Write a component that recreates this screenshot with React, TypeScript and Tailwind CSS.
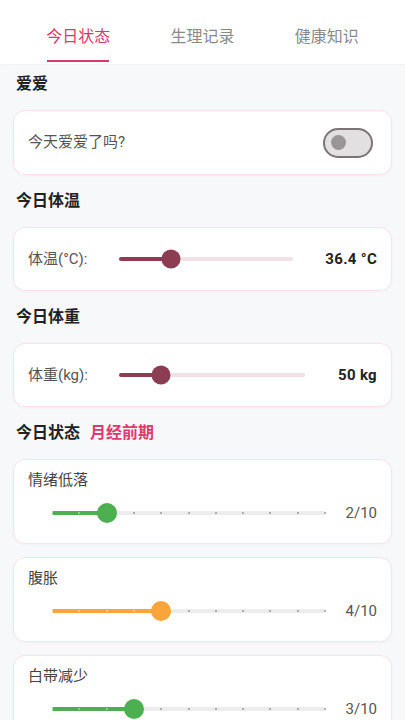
import { useState } from 'react';

const FONT = { fontFamily: 'Roboto, "Noto Sans CJK SC", "Noto Sans", sans-serif' };

const TABS = ['今日状态', '生理记录', '健康知识'];

const SYMPTOMS = [
  { name: '情绪低落', value: 2, color: '#4caf50' },
  { name: '腹胀', value: 4, color: '#f9a53c' },
  { name: '白带减少', value: 3, color: '#4caf50' },
];

function SectionTitle({ children }: { children: React.ReactNode }) {
  return (
    <div className="mt-4 flex h-5 items-center gap-[10px] px-4 text-[16px] font-bold leading-5 text-[#222]">
      {children}
    </div>
  );
}

function Card({ children, className = '' }: { children: React.ReactNode; className?: string }) {
  return (
    <div
      className={`mx-[13px] rounded-[12px] border border-[#f8e3ea] bg-white shadow-[0_1px_3px_rgba(0,0,0,0.03)] ${className}`}
    >
      {children}
    </div>
  );
}

function MeasureSlider({ pct }: { pct: number }) {
  return (
    <div className="relative h-5 flex-1">
      <div className="absolute left-0 right-0 top-1/2 h-1 -translate-y-1/2 rounded-full bg-[#f1e0e5]" />
      <div
        className="absolute left-0 top-1/2 h-1 -translate-y-1/2 rounded-full bg-[#8c3d54]"
        style={{ width: `${pct}%` }}
      />
      <div
        className="absolute top-1/2 h-[19px] w-[19px] -translate-x-1/2 -translate-y-1/2 rounded-full bg-[#8c3d54]"
        style={{ left: `${pct}%` }}
      />
    </div>
  );
}

function LevelSlider({ value, color }: { value: number; color: string }) {
  const pct = value * 10;
  return (
    <div className="relative h-5 w-[273px]">
      <div className="absolute left-0 right-0 top-1/2 h-1 -translate-y-1/2 rounded-full bg-[#ececec]" />
      <div
        className="absolute left-0 top-1/2 h-1 -translate-y-1/2 rounded-full"
        style={{ width: `${pct}%`, backgroundColor: color }}
      />
      {Array.from({ length: 11 }).map((_, i) => (
        <div
          key={i}
          className={`absolute top-1/2 h-[2px] w-[2px] -translate-x-1/2 -translate-y-1/2 rounded-full ${
            i < value ? 'bg-white/50' : 'bg-[#999]'
          }`}
          style={{ left: `${i * 10}%` }}
        />
      ))}
      <div
        className="absolute top-1/2 h-5 w-5 -translate-x-1/2 -translate-y-1/2 rounded-full"
        style={{ left: `${pct}%`, backgroundColor: color }}
      />
    </div>
  );
}

export default function App() {
  const [tab, setTab] = useState(0);
  const [love, setLove] = useState(false);

  return (
    <div className="min-h-screen bg-[#f7f8fa] pb-6" style={FONT}>
      <header className="flex h-16 bg-white px-4 shadow-[0_1px_2px_rgba(0,0,0,0.03)]">
        {TABS.map((t, i) => (
          <button
            key={t}
            onClick={() => setTab(i)}
            className="flex flex-1 flex-col items-center"
          >
            <span
              className={`mt-[26px] text-[16px] leading-[22px] ${
                tab === i ? 'text-[#d93a6c]' : 'text-[#8a8a8a]'
              }`}
            >
              {t}
            </span>
            {tab === i && <span className="mt-[12px] h-[2px] w-[62px] bg-[#d93a6c]" />}
          </button>
        ))}
      </header>

      <div className="mt-[10px] flex h-5 items-center px-4 text-[16px] font-bold leading-5 text-[#222]">爱爱</div>
      <Card className="mt-4 flex h-[65px] items-center justify-between pl-[14px] pr-[18px]">
        <span className="text-[15px] text-[#555]">今天爱爱了吗?</span>
        <button
          onClick={() => setLove(!love)}
          className="flex h-[30px] w-[50px] items-center rounded-full border-2 border-[#7a7474] bg-[#e2e0e0] px-[6px]"
        >
          <span className="h-[15px] w-[15px] rounded-full bg-[#9a9696]" />
        </button>
      </Card>

      <SectionTitle>今日体温</SectionTitle>
      <Card className="mt-4 flex h-[64px] items-center pl-[14px] pr-[14px]">
        <span className="w-[91px] shrink-0 text-[15px] text-[#555]">体温(°C):</span>
        <MeasureSlider pct={30} />
        <span className="ml-[32px] text-[15px] font-bold tracking-[0.3px] text-[#222]">36.4 °C</span>
      </Card>

      <SectionTitle>今日体重</SectionTitle>
      <Card className="mt-4 flex h-[64px] items-center pl-[14px] pr-[14px]">
        <span className="w-[91px] shrink-0 text-[15px] text-[#555]">体重(kg):</span>
        <MeasureSlider pct={22.5} />
        <span className="ml-[33px] text-[15px] font-bold tracking-[0.3px] text-[#222]">50 kg</span>
      </Card>

      <SectionTitle>
        <span>今日状态</span>
        <span className="text-[#e0396f]">月经前期</span>
      </SectionTitle>

      <div className="mt-4 flex flex-col gap-[13px]">
        {SYMPTOMS.map((s) => (
          <Card key={s.name} className="h-[85px] pl-[14px] pr-[14px] pt-[10px]">
            <div className="text-[15px] leading-5 text-[#444]">{s.name}</div>
            <div className="mt-[12px] flex items-center pl-6">
              <LevelSlider value={s.value} color={s.color} />
              <span className="flex-1 text-right text-[15px] text-[#555]">{s.value}/10</span>
            </div>
          </Card>
        ))}
      </div>
    </div>
  );
}
